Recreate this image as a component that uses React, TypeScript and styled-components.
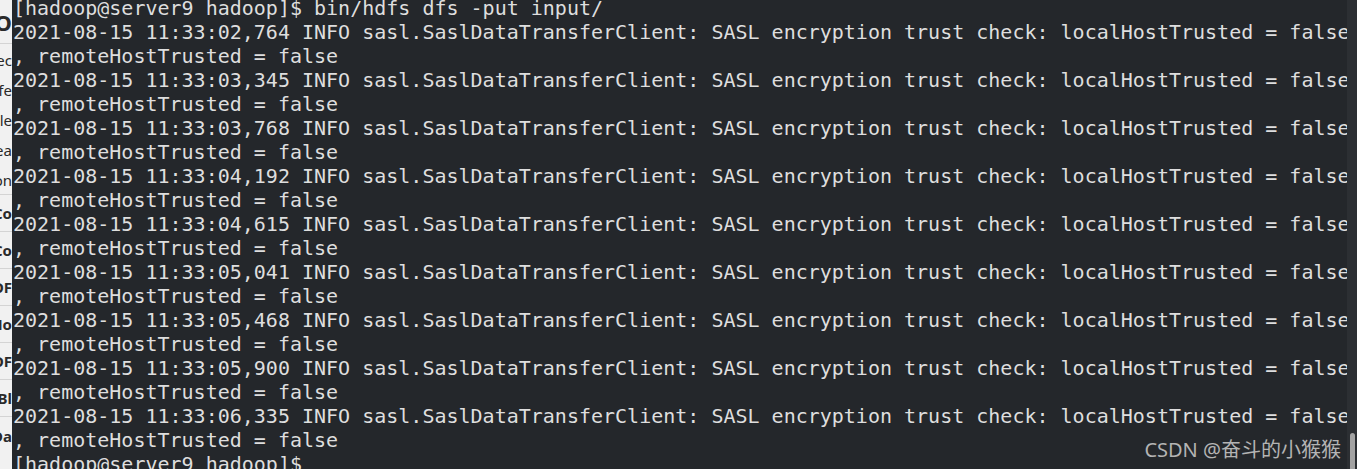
import React from "react";
import styled, { createGlobalStyle } from "styled-components";

const Global = createGlobalStyle`
  html, body { margin: 0; padding: 0; background: #24272b; overflow: hidden; }
  #root { width: 1357px; height: 469px; }
`;

const Screen = styled.div`
  display: flex;
  width: 1357px;
  height: 469px;
  position: relative;
  overflow: hidden;
  background: #24272b;
`;

const Strip = styled.div`
  width: 12px;
  flex: none;
  background: #f1f1f1;
  display: flex;
  flex-direction: column;
  overflow: hidden;
  font-family: "Noto Sans", "Liberation Sans", sans-serif;
  color: #2a2a2a;
`;

const StripItem = styled.div<{ $h: number; $line?: boolean; $bold?: boolean; $size?: number }>`
  height: ${(p) => p.$h}px;
  flex: none;
  display: flex;
  align-items: center;
  justify-content: flex-end;
  overflow: hidden;
  white-space: nowrap;
  font-size: ${(p) => p.$size ?? 15}px;
  font-weight: ${(p) => (p.$bold ? 700 : 400)};
  border-bottom: ${(p) => (p.$line ? "1px solid #d4d4d4" : "none")};
  box-sizing: border-box;
`;

const Term = styled.pre`
  flex: 1;
  margin: -4px 0 0 0;
  padding: 0 0 0 1px;
  font-family: "DejaVu Sans Mono", monospace;
  font-size: 20px;
  line-height: 24px;
  color: #dedede;
  white-space: pre;
  overflow: hidden;
`;

const Track = styled.div`
  width: 10px;
  flex: none;
  background: #2c2f33;
  display: flex;
  flex-direction: column;
  justify-content: flex-end;
  align-items: center;
  padding-left: 1px;
  box-sizing: border-box;
`;

const Thumb = styled.div`
  width: 5px;
  height: 44px;
  margin-bottom: -8px;
  border-radius: 3px;
  background: #a3a3a3;
`;

const Watermark = styled.div`
  position: absolute;
  right: 16px;
  bottom: 7px;
  font-family: "Noto Sans", "Noto Sans CJK SC", sans-serif;
  font-size: 20px;
  line-height: 24px;
  color: #b4b4b4;
  white-space: nowrap;
`;

const times = ["02,764", "03,345", "03,768", "04,192", "04,615", "05,041", "05,468", "05,900", "06,335"];

const lines: string[] = ["[hadoop@server9 hadoop]$ bin/hdfs dfs -put input/"];
times.forEach((t) => {
  lines.push(
    `2021-08-15 11:33:${t} INFO sasl.SaslDataTransferClient: SASL encryption trust check: localHostTrusted = false`
  );
  lines.push(", remoteHostTrusted = false");
});
lines.push("[hadoop@server9 hadoop]$ ");

const strip = [
  { t: "DO", h: 44, line: true, bold: true, size: 22 },
  { t: "Sec", h: 31 },
  { t: "Safe", h: 30 },
  { t: "file", h: 30 },
  { t: "ea", h: 30 },
  { t: "on", h: 30, line: true },
  { t: "Co", h: 37, line: true, bold: true },
  { t: "Co", h: 37, line: true, bold: true },
  { t: "OF", h: 37, line: true, bold: true },
  { t: "No", h: 37, line: true, bold: true },
  { t: "OF", h: 37, line: true, bold: true },
  { t: "Bl", h: 37, line: true, bold: true },
  { t: "Da", h: 37, bold: true },
];

export default function App() {
  return (
    <>
      <Global />
      <Screen>
        <Strip>
          {strip.map((s, i) => (
            <StripItem key={i} $h={s.h} $line={s.line} $bold={s.bold} $size={s.size}>
              {s.t}
            </StripItem>
          ))}
        </Strip>
        <Term>{lines.join("\n")}</Term>
        <Track>
          <Thumb />
        </Track>
        <Watermark>CSDN @奋斗的小猴猴</Watermark>
      </Screen>
    </>
  );
}
